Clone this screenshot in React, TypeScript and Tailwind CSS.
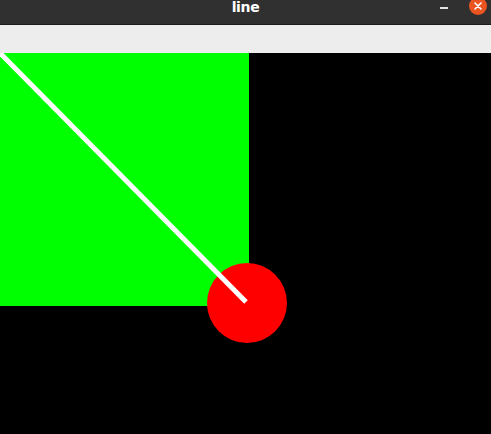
import React from "react";

export default function App() {
  return (
    <div className="flex flex-col w-[491px] h-[434px] overflow-hidden bg-black">
      <div className="relative h-[25px] shrink-0 bg-[#303030] border-b border-[#1c1c1c]">
        <div className="absolute left-0 right-0 top-0 text-center text-[14px] font-bold leading-[14px] text-white font-['DejaVu_Sans',sans-serif] tracking-tight">
          line
        </div>
        <div className="absolute left-[440px] top-[7px] w-[8px] h-[1.5px] bg-[#e0e0e0]" />
        <div className="absolute left-[469px] top-[-3px] flex items-center justify-center w-[18px] h-[18px] rounded-full bg-[#e95420]">
          <svg width="10" height="10" viewBox="0 0 10 10">
            <path d="M2 2 L8 8 M8 2 L2 8" stroke="white" strokeWidth="1.6" strokeLinecap="round" />
          </svg>
        </div>
      </div>
      <div className="h-[28px] shrink-0 bg-[#ededed]" />
      <div className="flex-1">
        <svg width="491" height="381" viewBox="0 0 491 381" className="block">
          <rect x="0" y="0" width="249" height="253" fill="#00ff00" />
          <circle cx="247" cy="250" r="40" fill="#ff0000" />
          <line x1="-2" y1="-2" x2="246" y2="249" stroke="white" strokeWidth="5" />
        </svg>
      </div>
    </div>
  );
}
